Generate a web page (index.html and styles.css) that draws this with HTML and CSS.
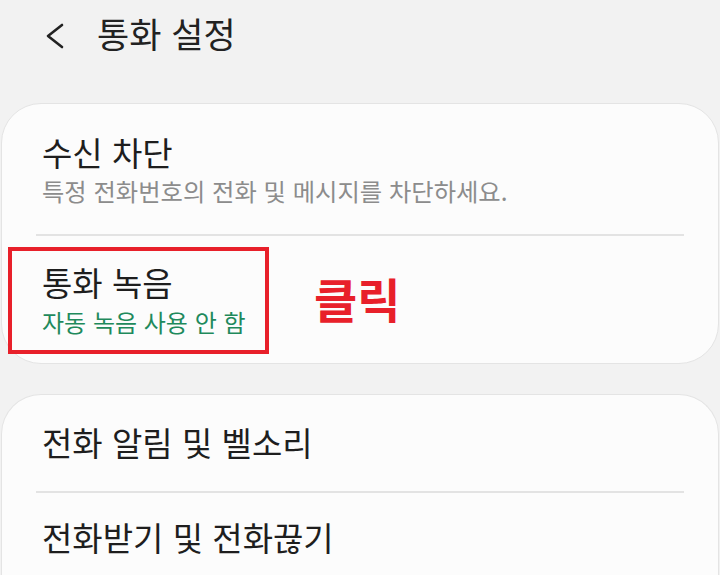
FILE: index.html
```html
<!DOCTYPE html>
<html lang="ko">
<head>
<meta charset="utf-8">
<link rel="stylesheet" href="styles.css">
</head>
<body>
<header class="appbar">
  <svg class="back" width="24" height="30" viewBox="0 0 24 30"><polyline points="18,4 4,15 18,26" fill="none" stroke="#222" stroke-width="2.6" stroke-linecap="round" stroke-linejoin="round"/></svg>
  <h1 class="title">통화 설정</h1>
</header>
<main class="content">
  <section class="card">
    <div class="item item-first">
      <div class="item-title">수신 차단</div>
      <div class="item-sub">특정 전화번호의 전화 및 메시지를 차단하세요.</div>
    </div>
    <div class="divider"></div>
    <div class="item item-rec">
      <div class="item-title">통화 녹음</div>
      <div class="item-sub green">자동 녹음 사용 안 함</div>
      <div class="highlight"></div>
      <div class="click-label">클릭</div>
    </div>
  </section>
  <section class="card card2">
    <div class="item item-a">
      <div class="item-title">전화 알림 및 벨소리</div>
    </div>
    <div class="divider"></div>
    <div class="item item-b">
      <div class="item-title">전화받기 및 전화끊기</div>
    </div>
  </section>
</main>
</body>
</html>
```

FILE: styles.css
```css
html, body {
  margin: 0;
  padding: 0;
}
body {
  background: #f2f2f2;
  font-family: "Noto Sans CJK KR", "Noto Sans", sans-serif;
  color: #202020;
  width: 720px;
  height: 575px;
  overflow: hidden;
}
.appbar {
  height: 103px;
  display: flex;
  align-items: flex-start;
  box-sizing: border-box;
  padding-top: 20px;
}
.back {
  margin-left: 44px;
  margin-top: 1px;
}
.title {
  margin: -9px 0 0 29px;
  font-size: 35px;
  font-weight: 400;
  line-height: 44px;
  color: #222;
}
.content {
  display: flex;
  flex-direction: column;
  gap: 30px;
}
.card {
  margin: 0 1px;
  background: #fcfcfc;
  border: 1px solid #e4e4e4;
  border-radius: 40px;
  box-sizing: border-box;
}
.card2 {
  border-bottom: none;
  border-radius: 40px 40px 0 0;
  height: 200px;
}
.item {
  padding-left: 40px;
  position: relative;
  display: flex;
  flex-direction: column;
}
.item-title {
  font-size: 33px;
  line-height: 40px;
  color: #1e1e1e;
}
.item-sub {
  font-size: 24.3px;
  line-height: 29px;
  color: #8c8c8c;
}
.green {
  color: #1f8a5c;
  font-size: 24px;
}
.item-first {
  padding-top: 28px;
  padding-bottom: 29px;
  gap: 4px;
}
.item-rec {
  padding-top: 26px;
  padding-bottom: 27px;
  gap: 5px;
}
.item-a {
  padding-top: 27px;
  padding-bottom: 29px;
}
.item-b {
  padding-top: 24px;
}
.divider {
  height: 2px;
  background: #e3e3e3;
  margin: 0 34px;
}
.highlight {
  position: absolute;
  left: 6px;
  top: 11px;
  width: 253px;
  height: 99px;
  border: 4px solid #e8202a;
}
.click-label {
  position: absolute;
  left: 312px;
  top: 32px;
  font-size: 47px;
  line-height: 60px;
  font-weight: 700;
  color: #e8202a;
}
```
